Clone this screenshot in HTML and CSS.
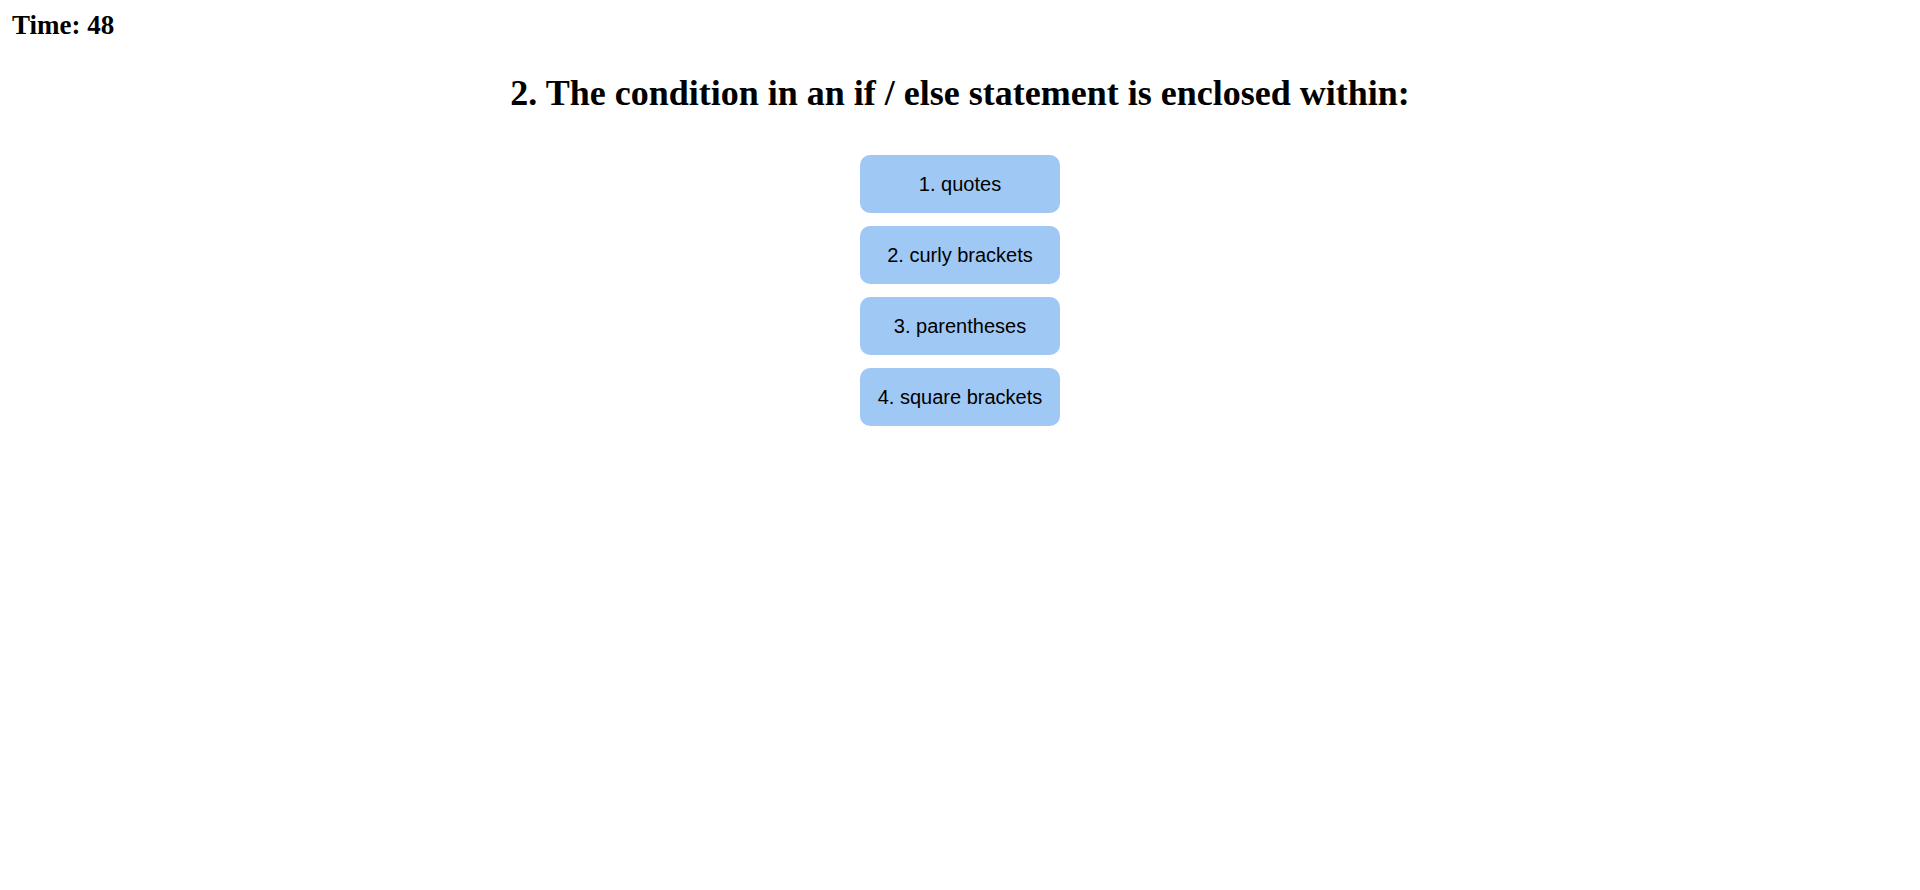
FILE: index.html
```html
<!DOCTYPE html>
<html>
<head>
<meta charset="utf-8">
<link rel="stylesheet" href="styles.css">
</head>
<body>
<header class="top">
  <div class="timer">Time: 48</div>
</header>
<main class="quiz">
  <h1 class="question">2. The condition in an if / else statement is enclosed within:</h1>
  <div class="choices">
    <button class="choice">1. quotes</button>
    <button class="choice">2. curly brackets</button>
    <button class="choice">3. parentheses</button>
    <button class="choice">4. square brackets</button>
  </div>
</main>
</body>
</html>
```
FILE: styles.css
```css
html, body {
  margin: 0;
  padding: 0;
  background: #ffffff;
}
body {
  font-family: "Liberation Serif", "Times New Roman", serif;
  font-size: 18px;
  color: #000;
}
.top {
  padding: 10px 12px 0;
}
.timer {
  font-size: 27px;
  font-weight: bold;
  line-height: 31px;
}
.quiz {
  display: flex;
  flex-direction: column;
  align-items: center;
}
.question {
  font-size: 36px;
  font-weight: bold;
  line-height: 41px;
  margin: 32px 0 41px;
  text-align: center;
}
.choices {
  display: flex;
  flex-direction: column;
  gap: 13px;
  align-items: center;
}
.choice {
  width: 200px;
  height: 58px;
  border: none;
  border-radius: 10px;
  background: #a0c8f4;
  font-family: "Liberation Sans", Arial, sans-serif;
  font-size: 20px;
  color: #000;
  padding: 0;
}
```
